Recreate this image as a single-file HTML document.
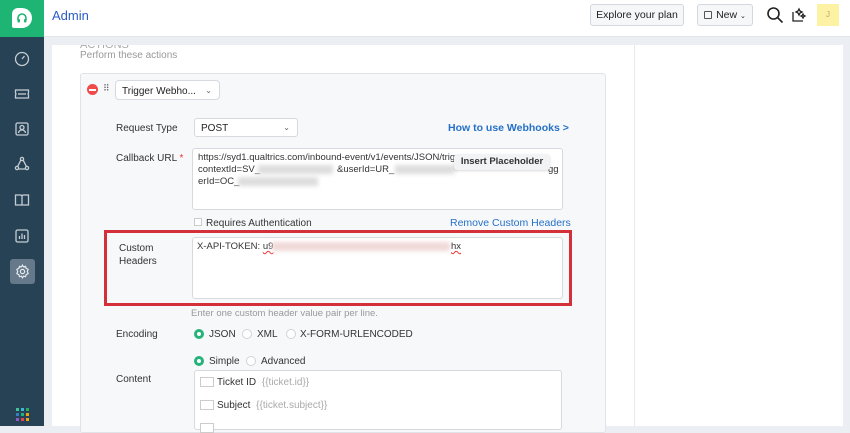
<!DOCTYPE html>
<html><head><meta charset="utf-8"><style>
*{box-sizing:border-box;margin:0;padding:0}
body{width:850px;height:426px;overflow:hidden;font-family:"Liberation Sans",sans-serif;font-size:10px;color:#333;background:#ebeef2;position:relative}
.abs{position:absolute}
#side{left:0;top:0;width:44px;height:426px;background:#264254}
#logo{left:0;top:0;width:44px;height:37px;background:#1db474}
#top{left:44px;top:0;width:806px;height:37px;background:#fff;border-bottom:1px solid #e2e6ea}
.btn{border:1px solid #d3d8de;border-radius:3px;background:#f5f7f9;height:23px;font-size:10.5px;color:#222;line-height:21px;text-align:center;white-space:nowrap}
#panel{left:52px;top:45px;width:791px;height:381px;background:#fff}
#card{left:80px;top:73px;width:526px;height:360px;background:#f7f8fa;border:1px solid #e0e4e8;border-radius:3px}
.lbl{font-size:10px;color:#333;white-space:nowrap}
.inp{background:#fff;border:1px solid #d6dadf;border-radius:3px}
.blur{background:#ddd;filter:blur(2px);height:9px}
.link{color:#2670c8;font-size:10.5px}
.radio{width:10px;height:10px;border-radius:50%;border:1px solid #cfd3d8;background:#fff}
.radio.on{border:3px solid #26b37a;background:#fff}
.ico{left:13px;width:18px;height:18px}
.u{font-size:9.5px;color:#333;white-space:nowrap}
</style></head><body>
<div id="side" class="abs"></div>
<div id="logo" class="abs"><div class="abs" style="left:12px;top:8px;width:20px;height:20px;background:#fff;border-radius:6px 10px 10px 2px"></div>
<svg class="abs" style="left:15px;top:11px" width="14" height="14" viewBox="0 0 14 14"><path d="M3 9V7a4 4 0 0 1 8 0v2" fill="none" stroke="#1db474" stroke-width="1.6"/><rect x="2.5" y="8" width="2.5" height="3.5" rx="1" fill="#1db474"/><rect x="9" y="8" width="2.5" height="3.5" rx="1" fill="#1db474"/></svg></div>
<svg class="abs ico" style="top:50px" viewBox="0 0 18 18" fill="none" stroke="#c5cdd4" stroke-width="1.3"><circle cx="9" cy="9" r="6.5"/><path d="M9 9l2.5-3"/></svg>
<svg class="abs ico" style="top:85px" viewBox="0 0 18 18" fill="none" stroke="#c5cdd4" stroke-width="1.3"><path d="M2.5 5h13v3a1.5 1.5 0 0 0 0 2v3h-13v-3a1.5 1.5 0 0 0 0-2z"/><path d="M5 9h8"/></svg>
<svg class="abs ico" style="top:120px" viewBox="0 0 18 18" fill="none" stroke="#c5cdd4" stroke-width="1.3"><rect x="3" y="3" width="12" height="12" rx="1.5"/><circle cx="9" cy="7.5" r="2"/><path d="M5.5 13a3.5 3 0 0 1 7 0"/></svg>
<svg class="abs ico" style="top:155px" viewBox="0 0 18 18" fill="none" stroke="#c5cdd4" stroke-width="1.3"><circle cx="9" cy="4" r="1.6"/><circle cx="4" cy="13" r="1.6"/><circle cx="14" cy="13" r="1.6"/><path d="M7.8 5.2L4.6 11.5M10.2 5.2l3.2 6.3M5.6 14h6.8"/></svg>
<svg class="abs ico" style="top:191px" viewBox="0 0 18 18" fill="none" stroke="#c5cdd4" stroke-width="1.3"><path d="M2.5 4h5.5l1 1 1-1h5.5v10h-13zM9 5v9"/></svg>
<svg class="abs ico" style="top:227px" viewBox="0 0 18 18" fill="none" stroke="#c5cdd4" stroke-width="1.3"><rect x="3" y="3" width="12" height="12" rx="1.5"/><path d="M6.5 12V9M9 12V6.5M11.5 12V8"/></svg>
<div class="abs" style="left:10px;top:259px;width:25px;height:25px;background:#66798a;border-radius:3px"></div>
<svg class="abs" style="left:14px;top:263px" width="17" height="17" viewBox="0 0 24 24" fill="none" stroke="#e8edf0" stroke-width="1.6"><circle cx="12" cy="12" r="3"/><path d="M12 3l1.5 2.5 2.8-.8.8 2.8L20 9l-1.2 3 1.2 3-2.9 1.5-.8 2.8-2.8-.8L12 21l-1.5-2.5-2.8.8-.8-2.8L4 15l1.2-3L4 9l2.9-1.5.8-2.8 2.8.8z"/></svg>
<div class="abs" style="left:16px;top:408px;width:13px;height:13px;display:grid;grid-template-columns:repeat(3,3px);gap:2px">
<i style="background:#3fc39a"></i><i style="background:#3fb7d8"></i><i style="background:#27ae60"></i><i style="background:#2f80c4"></i><i style="background:#1fb57a"></i><i style="background:#e8a317"></i><i style="background:#8e5ac8"></i><i style="background:#e04848"></i><i style="background:#e8a317"></i></div>

<div id="top" class="abs">
<div class="abs" style="left:8px;top:8px;font-size:13px;color:#2c5cc5">Admin</div>
<div class="abs btn" style="left:546px;top:4px;width:94px;height:22px">Explore your plan</div>
<div class="abs btn" style="left:653px;top:4px;width:56px;height:22px"><span style="display:inline-block;width:8px;height:8px;border:1px solid #555;border-radius:1px;vertical-align:-1px;margin-right:4px"></span>New <span style="font-size:7px">⌄</span></div>
<svg class="abs" style="left:722px;top:6px" width="18" height="18" viewBox="0 0 18 18" fill="none" stroke="#222" stroke-width="1.6"><circle cx="7.5" cy="7.5" r="5.5"/><path d="M11.5 11.5l5 5"/></svg>
<svg class="abs" style="left:746px;top:6px" width="18" height="18" viewBox="0 0 18 18" fill="none" stroke="#222" stroke-width="1.3"><path d="M3 6v9h10"/><path d="M9 3l1 2 2 1-2 1-1 2-1-2-2-1 2-1zM13 8l.7 1.3 1.3.7-1.3.7-.7 1.3-.7-1.3-1.3-.7 1.3-.7z"/></svg>
<div class="abs" style="left:773px;top:4px;width:22px;height:22px;background:#fdf2a4;color:#b9a870;font-size:8px;text-align:center;line-height:22px">J</div>
</div>

<div id="panel" class="abs"></div>
<div class="abs" style="left:634px;top:45px;width:1px;height:381px;background:#e6e9ed"></div>
<div class="abs" style="left:80px;top:45px;width:100px;height:4px;overflow:hidden"><div style="font-size:11px;color:#aaa;margin-top:-6px">ACTIONS</div></div>
<div class="abs" style="left:80px;top:50px;font-size:10px;color:#999">Perform these actions</div>
<div id="card" class="abs"></div>
<div class="abs" style="left:87px;top:84px;width:11px;height:11px;border-radius:50%;background:#ef4b4b"><div style="margin:5px 2px 0;height:1.5px;background:#fff"></div></div>
<div class="abs" style="left:103px;top:83px;font-size:9px;color:#666;letter-spacing:-1px">⠿</div>
<div class="abs inp" style="left:115px;top:80px;width:105px;height:20px;border-radius:4px;font-size:10px;padding:5px 6px;color:#222">Trigger Webho... <span style="position:absolute;right:7px;font-size:8px;color:#666">⌄</span></div>

<div class="abs lbl" style="left:116px;top:123px">Request Type</div>
<div class="abs inp" style="left:194px;top:118px;width:104px;height:19px;padding:4px 6px;font-size:10px;color:#222">POST<span style="position:absolute;right:7px;font-size:8px;color:#666">⌄</span></div>
<div class="abs link" style="left:448px;top:122px;font-weight:bold">How to use Webhooks &gt;</div>

<div class="abs lbl" style="left:116px;top:153px">Callback URL <span style="color:#e33">*</span></div>
<div class="abs inp" style="left:192px;top:148px;width:371px;height:62px"></div>
<div class="abs u" style="left:198px;top:152px">https://syd1.qualtrics.com/inbound-event/v1/events/JSON/trigg</div>
<div class="abs u" style="left:198px;top:164px">contextId=SV_</div>
<div class="abs u" style="left:337px;top:164px">&amp;userId=UR_</div>
<div class="abs u" style="left:548px;top:164px">gg</div>
<div class="abs u" style="left:198px;top:176px">erId=OC_</div>
<div class="abs blur" style="left:258px;top:165px;width:75px"></div>
<div class="abs blur" style="left:395px;top:165px;width:60px"></div>
<div class="abs blur" style="left:238px;top:177px;width:80px"></div>
<div class="abs" style="left:454px;top:154px;width:96px;height:16px;background:#f1f3f5;border-radius:3px;box-shadow:0 1px 2px rgba(0,0,0,.15);font-size:9.5px;font-weight:bold;text-align:center;line-height:16px;color:#333">Insert Placeholder</div>

<div class="abs" style="left:194px;top:218px;width:8px;height:8px;border:1px solid #ccc;background:#fff"></div>
<div class="abs lbl" style="left:206px;top:218px">Requires Authentication</div>
<div class="abs link" style="left:450px;top:217px">Remove Custom Headers</div>

<div class="abs" style="left:104px;top:230px;width:468px;height:76px;border:3px solid #d3303a"></div>
<div class="abs lbl" style="left:119px;top:242px;line-height:13px">Custom<br>Headers</div>
<div class="abs inp" style="left:192px;top:237px;width:371px;height:62px"></div>
<div class="abs u" style="left:197px;top:241px">X-API-TOKEN: <u style="text-decoration:underline wavy #e33">u9</u></div>
<div class="abs blur" style="left:272px;top:242px;width:178px;background:#f0d8d8"></div>
<div class="abs u" style="left:451px;top:241px;text-decoration:underline wavy #e33">hx</div>
<div class="abs" style="left:191px;top:308px;font-size:9.5px;color:#999">Enter one custom header value pair per line.</div>

<div class="abs lbl" style="left:116px;top:329px">Encoding</div>
<div class="abs radio on" style="left:194px;top:329px"></div><div class="abs lbl" style="left:209px;top:329px">JSON</div>
<div class="abs radio" style="left:242px;top:329px"></div><div class="abs lbl" style="left:257px;top:329px">XML</div>
<div class="abs radio" style="left:286px;top:329px"></div><div class="abs lbl" style="left:300px;top:329px">X-FORM-URLENCODED</div>

<div class="abs radio on" style="left:194px;top:356px"></div><div class="abs lbl" style="left:209px;top:356px">Simple</div>
<div class="abs radio" style="left:246px;top:356px"></div><div class="abs lbl" style="left:261px;top:356px">Advanced</div>
<div class="abs lbl" style="left:116px;top:374px">Content</div>
<div class="abs inp" style="left:194px;top:370px;width:368px;height:60px"></div>
<div class="abs" style="left:200px;top:377px;width:14px;height:10px;border:1px solid #ccc;background:#fff"></div>
<div class="abs lbl" style="left:217px;top:377px">Ticket ID <span style="color:#aaa;margin-left:3px">{{ticket.id}}</span></div>
<div class="abs" style="left:200px;top:400px;width:14px;height:10px;border:1px solid #ccc;background:#fff"></div>
<div class="abs lbl" style="left:217px;top:400px">Subject <span style="color:#aaa;margin-left:3px">{{ticket.subject}}</span></div>
<div class="abs" style="left:200px;top:423px;width:14px;height:10px;border:1px solid #ccc;background:#fff"></div>
</body></html>
